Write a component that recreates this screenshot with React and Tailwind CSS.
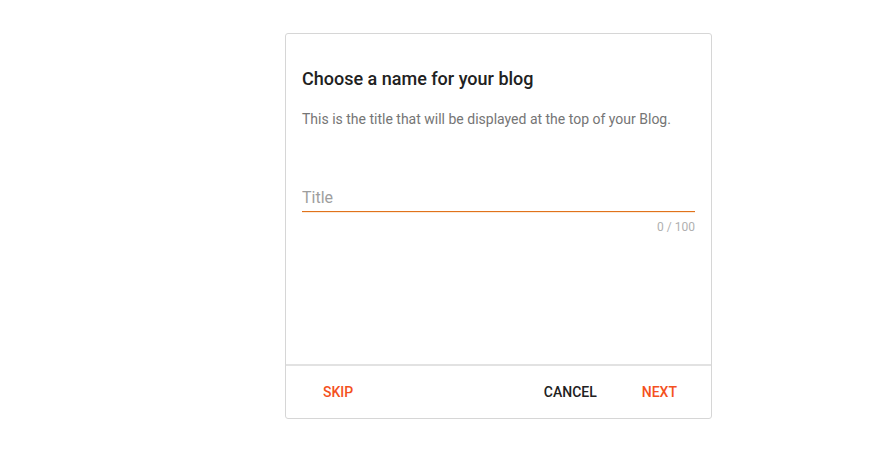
export default function App() {
  return (
    <div className="min-h-screen bg-white pt-[33px] pl-[285px]" style={{ fontFamily: 'Roboto, "Noto Sans", sans-serif' }}>
      <div className="w-[427px] h-[386px] border border-[#d6d6d6] rounded-[3px] flex flex-col bg-white">
        <div className="flex-1 px-4 pt-[33px]">
          <h2 className="text-[18px] leading-[24px] font-medium text-[#212121]">
            Choose a name for your blog
          </h2>
          <p className="mt-[18px] text-[14px] leading-[20px] text-[#757575]">
            This is the title that will be displayed at the top of your Blog.
          </p>
          <div className="mt-[55px]">
            <input
              type="text"
              placeholder="Title"
              className="block w-full h-[27px] text-[16px] text-[#212121] placeholder:text-[#9e9e9e] outline-none bg-transparent"
            />
            <div className="h-px bg-[#e0721c]" />
            <div className="h-px bg-[#fdebd8]" />
            <div className="mt-[6px] text-right text-[12px] leading-[16px] text-[#b0b0b0]">0 / 100</div>
          </div>
        </div>
        <div className="h-[54px] border-t-2 border-[#e2e2e2] flex items-center pl-[21px] pr-[18px] text-[14px] font-medium">
          <button className="px-4 h-9 text-[#f4511e]">SKIP</button>
          <div className="flex-1" />
          <button className="px-4 h-9 text-[#212121]">CANCEL</button>
          <button className="ml-[13px] px-4 h-9 text-[#f4511e]">NEXT</button>
        </div>
      </div>
    </div>
  );
}
